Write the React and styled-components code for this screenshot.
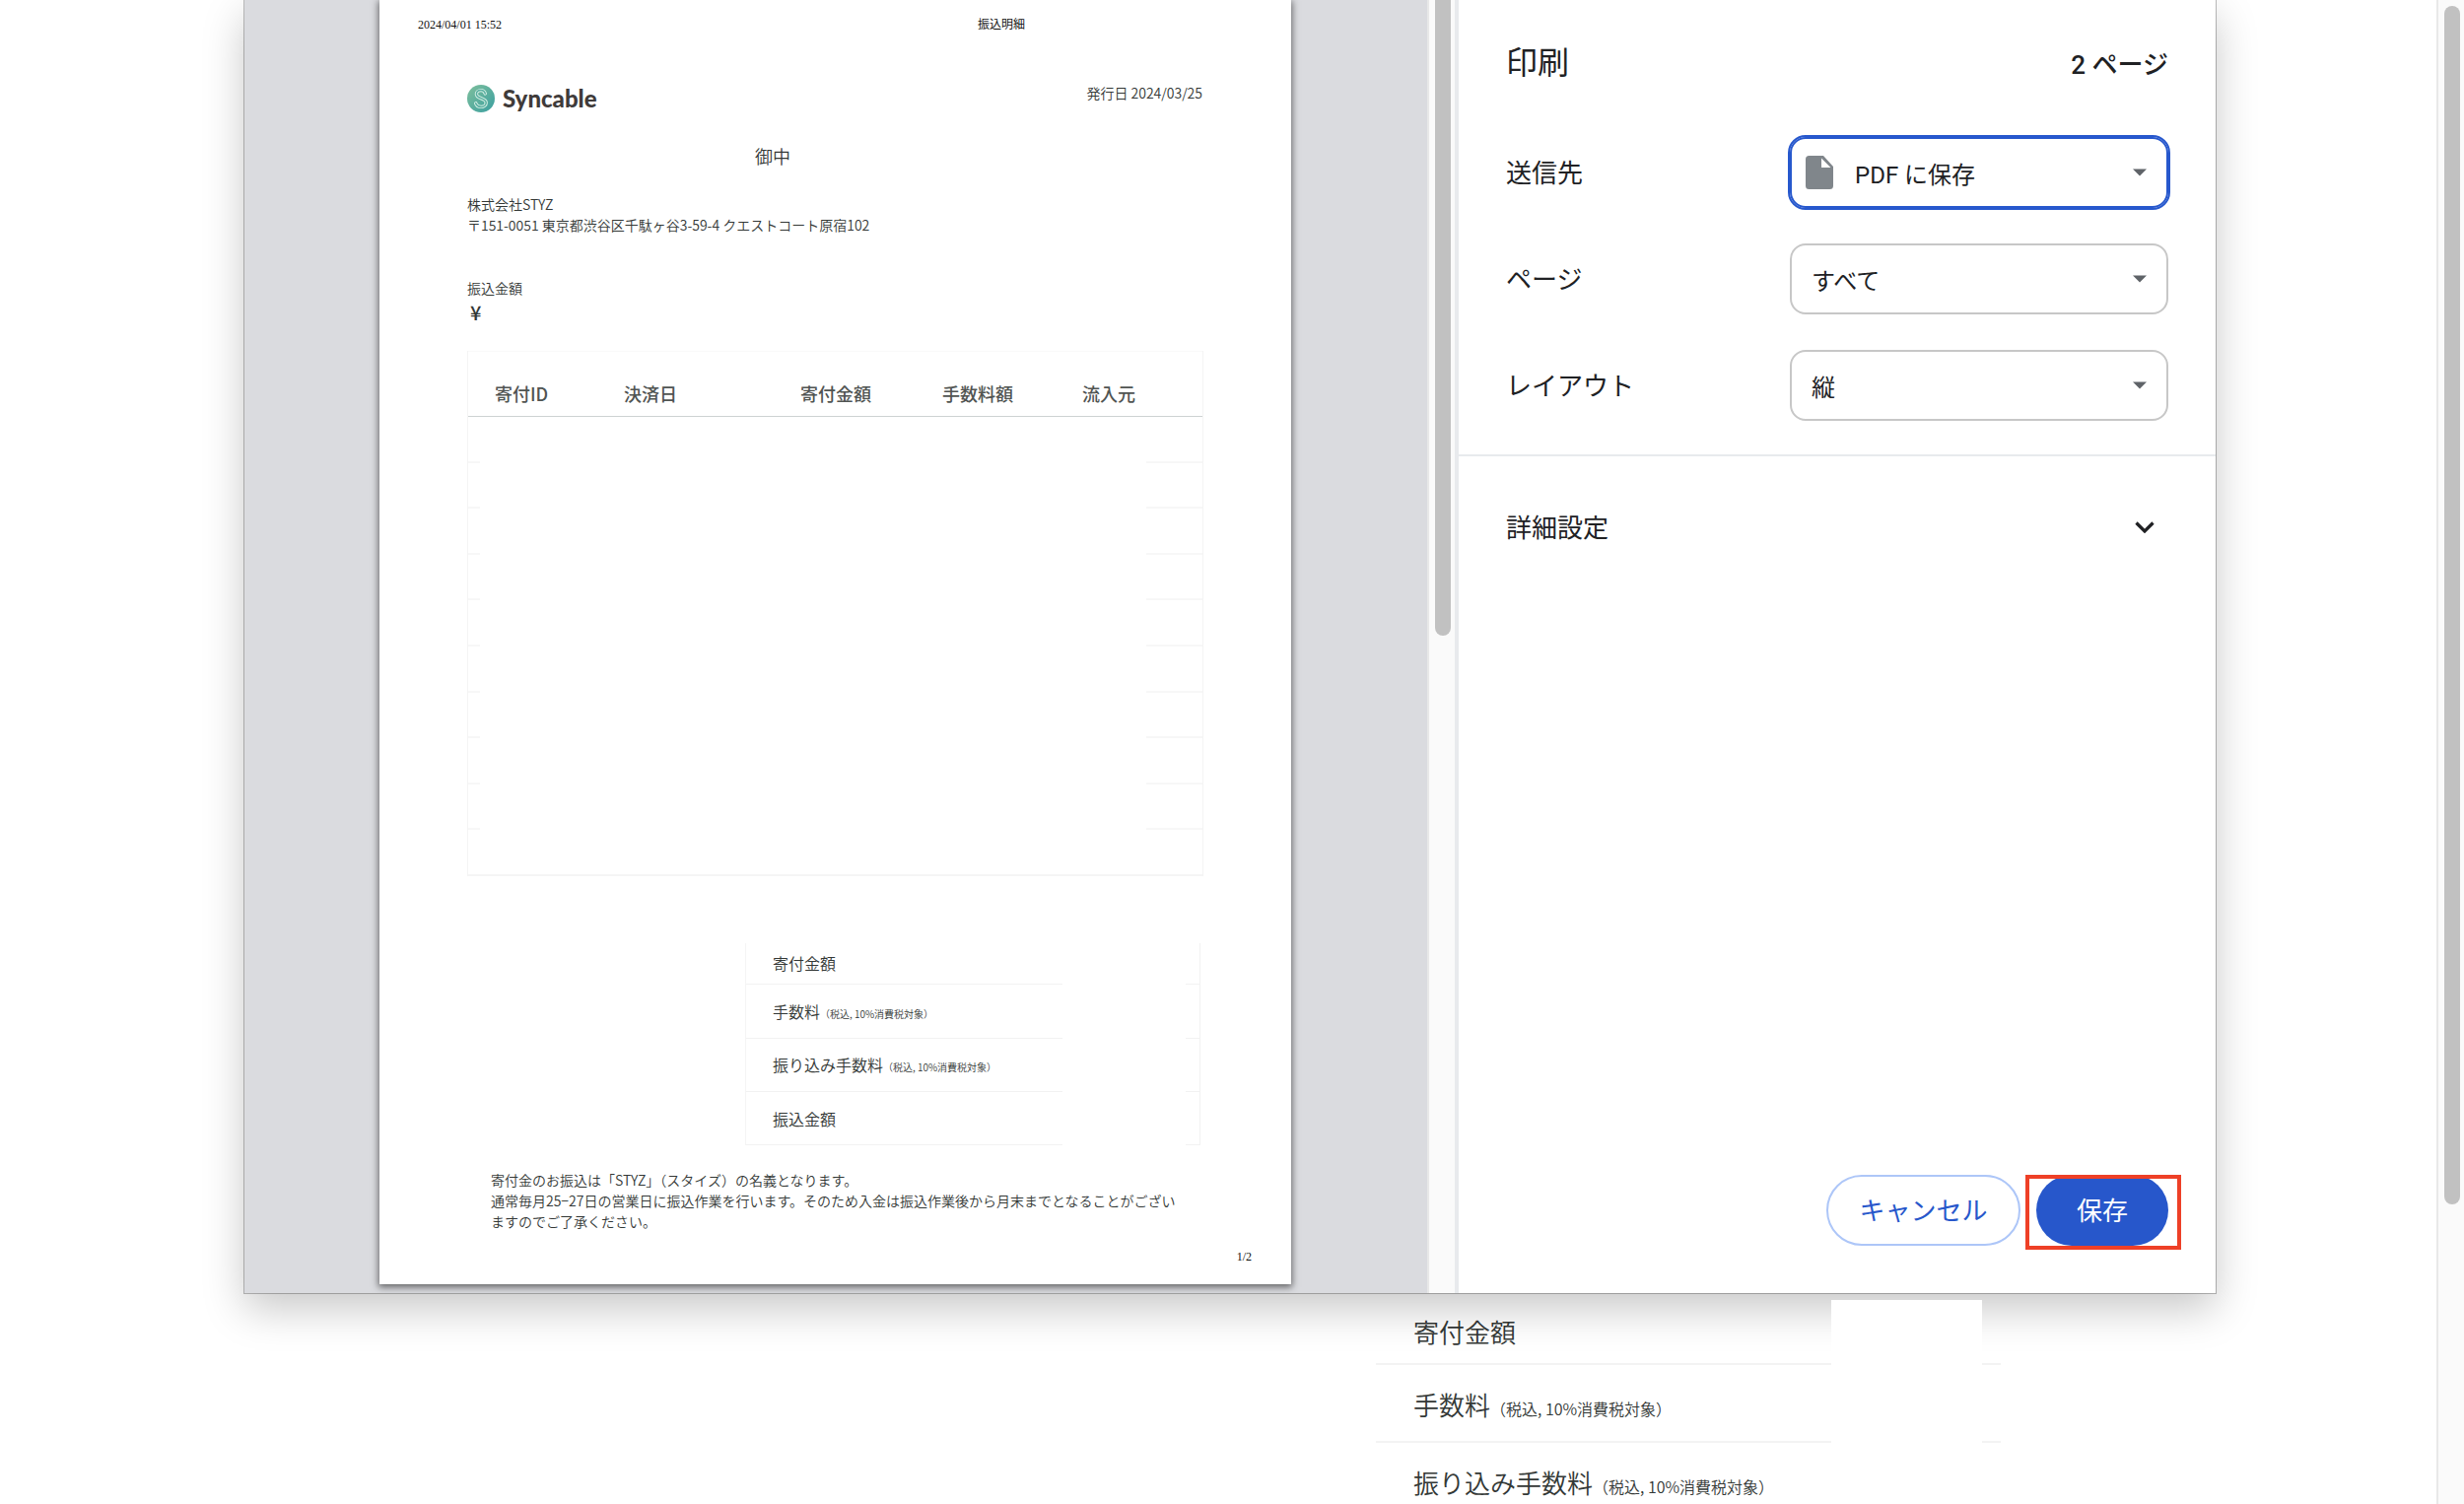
import React from "react";
import styled, { createGlobalStyle, css } from "styled-components";

const ink = "#333836";
const jp = `"Noto Sans CJK JP", sans-serif`;

const GlobalStyle = createGlobalStyle`
  *, *::before, *::after { box-sizing: border-box; }
  body { margin: 0; background: #fff; font-family: ${jp}; }
  h1, h2, p, address { margin: 0; font-weight: inherit; font-style: normal; }
  table { border-spacing: 0; table-layout: fixed; }
  td, th { padding: 0; font-weight: inherit; text-align: left; }
`;

/* ---------- page behind the dialog ---------- */

const Page = styled.div`
  position: relative;
  display: flex;
  height: 100vh;
  overflow: hidden;
`;

const PageBody = styled.main`
  flex: 1;
  min-width: 0;
  padding-top: 1305px;
`;

const PageColumn = styled.div`
  display: flex;
  justify-content: flex-end;
  max-width: 1588px;
  margin: 0 auto;
`;

const PageTotals = styled.table`
  width: 634px;
  color: ${ink};
  font-weight: 350;
  font-size: 26px;
  line-height: 36px;
`;

const PageTotalsLabel = styled.th`
  height: ${(p) => (p.$first ? 80 : 79)}px;
  padding: ${(p) => (p.$first ? 14 : 6)}px 0 0 38px;
  border-bottom: 2px solid #f3f3f3;
  white-space: nowrap;
`;

const PageTotalsAmount = styled.td`
  width: 153px;
  vertical-align: bottom;
`;

const AmountCover = styled.div`
  position: relative;
  z-index: 2;
  height: 66px;
  background: #fff;
`;

const PageTotalsTail = styled.td`
  width: 19px;
  border-bottom: 2px solid #f3f3f3;
`;

const PageNote = styled.small`
  font-size: 16px;
`;

const PageScrollbar = styled.div`
  width: 28px;
  padding: 6px 4px 0 6px;
  border-left: 2px solid #e8e8e8;
  background: #fafafa;
`;

const Thumb = styled.div`
  width: 16px;
  height: ${(p) => p.$size}px;
  border-radius: ${(p) => (p.$cut ? "0 0 8px 8px" : "8px")};
  background: #c1c1c1;
`;

/* ---------- dialog ---------- */

const Overlay = styled.div`
  position: absolute;
  inset: 0;
  z-index: 1;
  display: flex;
  justify-content: center;
  align-items: flex-start;
  padding-right: 4px;
`;

const Dialog = styled.section`
  display: flex;
  width: 90%;
  max-width: 2000px;
  background: #fff;
  box-shadow: 0 0 0 1px rgba(0, 0, 0, 0.26), 0 16px 40px rgba(0, 0, 0, 0.22);
`;

const Preview = styled.div`
  flex: 1;
  min-width: 0;
  display: flex;
  justify-content: center;
  align-items: flex-start;
  padding: 0 1px 9px 0;
  overflow: hidden;
  background: #dadbdf;
`;

const PreviewScrollbar = styled.div`
  width: 32px;
  padding-left: 6px;
  border-left: 2px solid #e8e8e8;
  border-right: 4px solid #e8eaed;
  background: #fafafa;
`;

/* ---------- printed sheet ---------- */

const Sheet = styled.article`
  width: 925px;
  padding: 16px 0 19px;
  background: #fff;
  color: ${ink};
  font-weight: 350;
  font-size: 14px;
  line-height: 21px;
  box-shadow: 0 2px 7px 1px rgba(0, 0, 0, 0.55);
`;

const SheetRunner = styled.header`
  display: grid;
  grid-template-columns: 568px 1fr;
  padding-left: 39px;
  color: #111;
  font: 12px/18px "Liberation Serif", "Noto Sans CJK JP", serif;
`;

const SheetFooter = styled.footer`
  margin-top: 16px;
  padding-right: 40px;
  text-align: right;
  color: #111;
  font: 12px/18px "Liberation Serif", serif;
`;

const SheetBody = styled.div`
  padding: 52px 90px 0 89px;
`;

const Masthead = styled.div`
  display: flex;
  justify-content: space-between;
  align-items: flex-start;
`;

const Brand = styled.div`
  display: flex;
  align-items: center;
  gap: 8px;
  height: 28px;
  color: #3f3b3a;
  font: 900 24px/28px Lato, sans-serif;
`;

const IssueDate = styled.p`
  line-height: 16px;
`;

const Addressee = styled.p`
  margin-top: 31px;
  padding-left: 292px;
  font-size: 18px;
  line-height: 26px;
`;

const Sender = styled.address`
  margin-top: 26px;
`;

const Transfer = styled.div`
  margin-top: 43px;
`;

const Yen = styled.p`
  padding-left: 3px;
  font-weight: 500;
  font-size: 20px;
  line-height: 28px;
`;

const Donations = styled.table`
  width: 745px;
  margin-top: 25px;
  border-right: 1px solid #f4f4f4;
  border-left: 1px solid #f4f4f4;
`;

const DonationHead = styled.th`
  width: ${(p) => p.$width}px;
  height: 67px;
  padding: 18px 0 0 27px;
  border-top: 1px solid #fafafa;
  border-bottom: 1px solid #cdd3d2;
  color: #505452;
  font-weight: 500;
  font-size: 18px;
  line-height: 24px;
`;

const DonationCell = styled.td`
  height: ${(p) => (p.$short ? 46 : 47)}px;
  vertical-align: bottom;
  ${(p) => p.$last && css`border-bottom: 2px solid #f5f5f5;`}
`;

const RowEdges = styled.div`
  display: flex;
  justify-content: space-between;
`;

const Edge = styled.span`
  width: ${(p) => p.$width}px;
  height: 2px;
  background: #f7f7f7;
`;

const Totals = styled.table`
  width: 462px;
  margin: 68px 2px 0 auto;
  font-size: 16px;
`;

const TotalsLabel = styled.th`
  height: ${(p) => p.$height}px;
  padding: ${(p) => (p.$first ? 0 : 2)}px 0 0 27px;
  border-left: 1px solid #f5f5f5;
  border-bottom: 1px solid #f2f2f2;
  white-space: nowrap;
`;

const TotalsAmount = styled.td`
  width: 125px;
`;

const TotalsTail = styled.td`
  width: 15px;
  border-right: 1px solid #f2f2f2;
  border-bottom: 1px solid #f2f2f2;
`;

const TotalsNote = styled.small`
  font-size: 10px;
`;

const Notice = styled.p`
  margin: 25px 16px 0 24px;
`;

/* ---------- settings column ---------- */

const Sidebar = styled.form`
  display: flex;
  flex-direction: column;
  width: 768px;
  color: #202124;
  font-family: Roboto, ${jp};
  font-size: 26px;
`;

const Settings = styled.div`
  display: grid;
  gap: 36px;
  padding: 44px 48px 34px;
  border-bottom: 2px solid #e8eaed;
`;

const TitleBar = styled.div`
  display: flex;
  justify-content: space-between;
  align-items: center;
  height: 40px;
  margin-bottom: 19px;
`;

const Title = styled.h1`
  font-size: 32px;
  line-height: 40px;
`;

const PageCount = styled.p`
  padding-bottom: 2px;
  font-weight: 500;
`;

const Field = styled.label`
  display: grid;
  grid-template-columns: 1fr 384px;
  align-items: center;
`;

const Caption = styled.span`
  padding-bottom: 4px;
`;

const SelectShell = styled.span`
  display: flex;
  align-items: center;
  height: 72px;
  padding: 0 20px 0 14px;
  border: 2px solid #c7c7c7;
  border-radius: 16px;
  ${(p) => p.$active && css`
    border-color: #2758cd;
    outline: 2px solid #2758cd;
  `}
`;

const Select = styled.select`
  flex: 1;
  min-width: 0;
  height: 100%;
  padding: 6px 0 0 ${(p) => (p.$icon ? 22 : 6)}px;
  border: 0;
  outline: 0;
  appearance: none;
  background: transparent;
  color: #202124;
  font: 24px Roboto, ${jp};
`;

const MoreButton = styled.button`
  display: flex;
  justify-content: space-between;
  align-items: center;
  height: 144px;
  padding: 0 62px 0 48px;
  border: 0;
  background: transparent;
  color: inherit;
  font: inherit;
`;

const Actions = styled.div`
  display: flex;
  justify-content: flex-end;
  gap: 16px;
  margin-top: auto;
  padding: 48px;
`;

const PillButton = styled.button`
  width: ${(p) => (p.$primary ? 134 : 197)}px;
  height: 72px;
  padding: 0 0 4px;
  border: ${(p) => (p.$primary ? "0" : "2px solid #adc6f8")};
  border-radius: 36px;
  background: ${(p) => (p.$primary ? "#2757cb" : "#fff")};
  color: ${(p) => (p.$primary ? "#fff" : "#2757cb")};
  font: inherit;
`;

const Highlight = styled.div`
  position: relative;
  &::after {
    content: "";
    position: absolute;
    inset: 0 -13px -4px -11px;
    border: 4px solid #ee4027;
    pointer-events: none;
  }
`;

function BrandMark() {
  const s = "M18.300 9C17.600 6.800 16 5.600 14 5.600c-2.600 0-4.600 1.600-4.600 4 0 5.200 9.800 3.400 9.800 8.600 0 2.500-2.200 4.200-5 4.200-2.800 0-4.900-1.400-5.500-3.600";
  return (
    <svg width="28" height="28" viewBox="0 0 28 28" aria-hidden="true">
      <defs>
        <linearGradient id="mark" x1="0" y1="0" x2="1" y2="1">
          <stop offset="0" stopColor="#7fbf9c" />
          <stop offset="1" stopColor="#3a9fa0" />
        </linearGradient>
      </defs>
      <circle cx="14" cy="14" r="14" fill="url(#mark)" />
      <path d={s} fill="none" stroke="#d5efe5" strokeWidth="3.400" strokeLinecap="round" />
      <path d={s} fill="none" stroke="#58aea0" strokeWidth="1.500" strokeLinecap="round" />
    </svg>
  );
}

function FileIcon() {
  return (
    <svg width="28" height="34" viewBox="0 0 28 34" aria-hidden="true">
      <path fill="#80868b" fillRule="evenodd" d="M3.500 0H18l10 11v19.500a3.500 3.500 0 0 1-3.500 3.500h-21A3.500 3.500 0 0 1 0 30.500v-27A3.500 3.500 0 0 1 3.500 0ZM16 2.500V12h9.500Z" />
    </svg>
  );
}

function Caret() {
  return (
    <svg width="14" height="8" viewBox="0 0 14 8" aria-hidden="true">
      <path d="M0 0.500h14L7 7.500Z" fill="#5f6368" />
    </svg>
  );
}

function Chevron() {
  return (
    <svg width="20" height="12" viewBox="0 0 20 12" aria-hidden="true">
      <path d="M1.500 1.500 10 10l8.500-8.500" fill="none" stroke="#202124" strokeWidth="3.200" />
    </svg>
  );
}

const taxNote = "（税込, 10%消費税対象）";

const columns = [
  { name: "寄付ID", width: 131 },
  { name: "決済日", width: 179 },
  { name: "寄付金額", width: 144 },
  { name: "手数料額", width: 142 },
  { name: "流入元", width: 149 },
];

const totals = [
  { name: "寄付金額", height: 42 },
  { name: "手数料", note: true, height: 55 },
  { name: "振り込み手数料", note: true, height: 54 },
  { name: "振込金額", height: 54 },
];

const fields = [
  { label: "送信先", value: "PDF に保存", icon: true, active: true },
  { label: "ページ", value: "すべて" },
  { label: "レイアウト", value: "縦" },
];

function StatementSheet() {
  return (
    <Sheet>
      <SheetRunner>
        <span>2024/04/01 15:52</span>
        <span>振込明細</span>
      </SheetRunner>
      <SheetBody>
        <Masthead>
          <Brand>
            <BrandMark />
            Syncable
          </Brand>
          <IssueDate>発行日 2024/03/25</IssueDate>
        </Masthead>
        <Addressee>御中</Addressee>
        <Sender>
          株式会社STYZ
          <br />
          〒151-0051 東京都渋谷区千駄ヶ谷3-59-4 クエストコート原宿102
        </Sender>
        <Transfer>
          <p>振込金額</p>
          <Yen>¥</Yen>
        </Transfer>
        <Donations>
          <thead>
            <tr>
              {columns.map((c) => (
                <DonationHead key={c.name} $width={c.width} scope="col">{c.name}</DonationHead>
              ))}
            </tr>
          </thead>
          <tbody>
            {Array.from({ length: 10 }, (_, i) => (
              <tr key={i}>
                <DonationCell colSpan={5} $short={i % 5 === 1 || i % 5 === 3} $last={i === 9}>
                  {i < 9 && (
                    <RowEdges>
                      <Edge $width={12} />
                      <Edge $width={57} />
                    </RowEdges>
                  )}
                </DonationCell>
              </tr>
            ))}
          </tbody>
        </Donations>
        <Totals>
          <tbody>
            {totals.map((t, i) => (
              <tr key={t.name}>
                <TotalsLabel scope="row" $height={t.height} $first={i === 0}>
                  {t.name}
                  {t.note && <TotalsNote>{taxNote}</TotalsNote>}
                </TotalsLabel>
                <TotalsAmount />
                <TotalsTail />
              </tr>
            ))}
          </tbody>
        </Totals>
        <Notice>
          寄付金のお振込は「STYZ」（スタイズ）の名義となります。
          <br />
          通常毎月25−27日の営業日に振込作業を行います。そのため入金は振込作業後から月末までとなることがございますのでご了承ください。
        </Notice>
      </SheetBody>
      <SheetFooter>1/2</SheetFooter>
    </Sheet>
  );
}

function PrintSettings() {
  return (
    <Sidebar onSubmit={(e) => e.preventDefault()}>
      <Settings>
        <TitleBar>
          <Title>印刷</Title>
          <PageCount>2 ページ</PageCount>
        </TitleBar>
        {fields.map((f) => (
          <Field key={f.label}>
            <Caption>{f.label}</Caption>
            <SelectShell $active={f.active}>
              {f.icon && <FileIcon />}
              <Select $icon={f.icon}>
                <option>{f.value}</option>
              </Select>
              <Caret />
            </SelectShell>
          </Field>
        ))}
      </Settings>
      <MoreButton type="button">
        <Caption>詳細設定</Caption>
        <Chevron />
      </MoreButton>
      <Actions>
        <PillButton type="button">キャンセル</PillButton>
        <Highlight>
          <PillButton type="submit" $primary>保存</PillButton>
        </Highlight>
      </Actions>
    </Sidebar>
  );
}

export default function App() {
  return (
    <>
      <GlobalStyle />
      <Page>
        <PageBody>
          <PageColumn>
            <PageTotals>
              <tbody>
                {totals.slice(0, 3).map((t, i) => (
                  <tr key={t.name}>
                    <PageTotalsLabel scope="row" $first={i === 0}>
                      {t.name}
                      {t.note && <PageNote>{taxNote}</PageNote>}
                    </PageTotalsLabel>
                    <PageTotalsAmount>
                      <AmountCover />
                    </PageTotalsAmount>
                    <PageTotalsTail />
                  </tr>
                ))}
              </tbody>
            </PageTotals>
          </PageColumn>
        </PageBody>
        <PageScrollbar>
          <Thumb $size={1216} />
        </PageScrollbar>
        <Overlay>
          <Dialog role="dialog" aria-label="印刷">
            <Preview>
              <StatementSheet />
            </Preview>
            <PreviewScrollbar>
              <Thumb $size={645} $cut />
            </PreviewScrollbar>
            <PrintSettings />
          </Dialog>
        </Overlay>
      </Page>
    </>
  );
}
